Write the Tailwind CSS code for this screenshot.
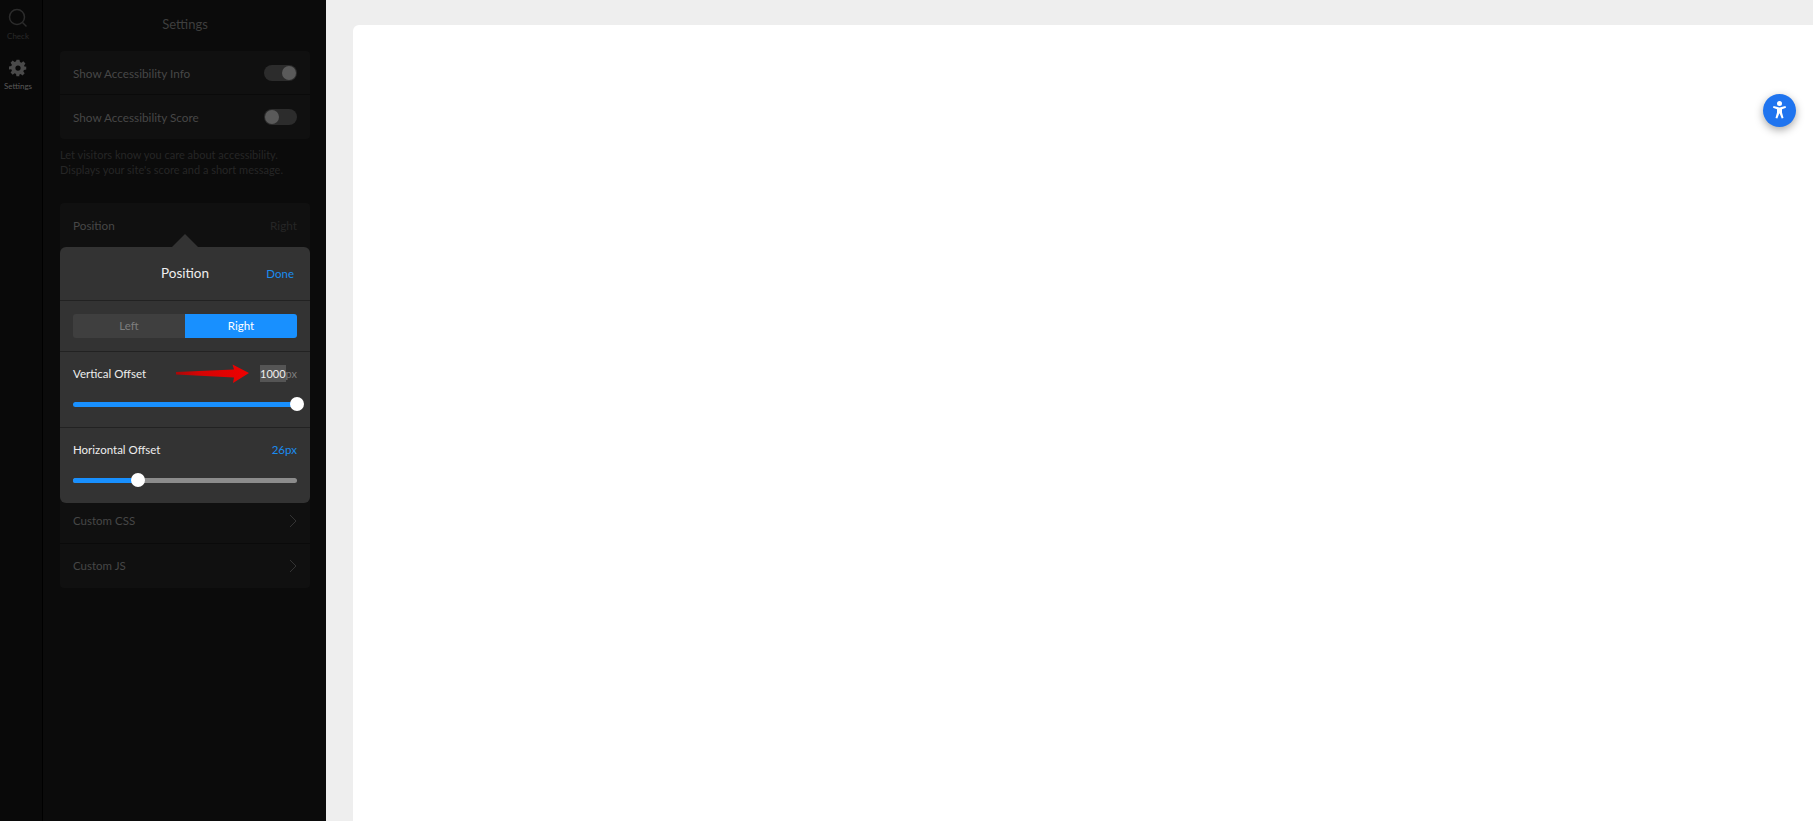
<!DOCTYPE html>
<html>
<head>
<meta charset="utf-8">
<script src="https://cdn.jsdelivr.net/npm/@tailwindcss/browser@4"></script>
</head>
<body class="overflow-hidden">
<div class="relative flex h-[821px] w-[1813px] overflow-hidden bg-[#eeeeee] font-['Lato',sans-serif]">

  <!-- icon rail -->
  <div class="flex h-full w-[43px] shrink-0 flex-col items-center border-r border-black bg-[#090909] pr-[6px] pt-[7px]">
    <svg class="h-[22px] w-[22px]" viewBox="0 0 22 22" fill="none" stroke="#2c2c2c" stroke-width="1.5">
      <circle cx="10" cy="10" r="7.5"></circle>
      <path d="M15.500 15.500L19.500 19.500"></path>
    </svg>
    <span class="mt-[1px] text-[8px] leading-[12px] text-[#2a2a2a]">Check</span>
    <svg class="mt-[17px] h-[18px] w-[18px]" viewBox="0 0 24 24" fill="#4a4a4a">
      <path fill-rule="evenodd" d="M10 1h4l.6 3.100 1.900.8 2.600-1.800 2.800 2.800-1.800 2.600.8 1.900L23 10v4l-3.100.6-.8 1.900 1.800 2.600-2.800 2.800-2.600-1.800-1.900.8L13.900 23h-4l-.5-3.100-1.900-.8-2.600 1.800-2.800-2.800 1.800-2.600-.8-1.900L0 13.900v-4l3.100-.5.8-1.900-1.800-2.600 2.800-2.800 2.600 1.800 1.900-.8zM12 8.500a3.500 3.500 0 100 7 3.500 3.500 0 000-7z"></path>
    </svg>
    <span class="mt-[3px] text-[8px] leading-[12px] text-[#5a5a5a]">Settings</span>
  </div>

  <!-- settings panel -->
  <div class="relative h-full w-[283px] shrink-0 bg-[#0b0b0b] pl-[17px] pr-[16px]">
    <div class="h-[51px] pt-[13px] text-center text-[13px] leading-[22px] text-[#3e3e3e]">Settings</div>

    <div class="rounded-[4px] bg-[#101010]">
      <div class="flex h-[44px] items-center justify-between border-b border-[#0a0a0a] px-[13px]">
        <span class="mt-[2px] text-[11.750px] text-[#474747]">Show Accessibility Info</span>
        <div class="flex h-[16px] w-[33px] items-center justify-end rounded-full bg-[#2c2c2c] pr-[1px]">
          <div class="h-[14px] w-[14px] rounded-full bg-[#5a5a5a]"></div>
        </div>
      </div>
      <div class="flex h-[44px] items-center justify-between px-[13px]">
        <span class="mt-[2px] text-[11.750px] text-[#474747]">Show Accessibility Score</span>
        <div class="flex h-[16px] w-[33px] items-center rounded-full bg-[#2c2c2c] pl-[1px]">
          <div class="h-[14px] w-[14px] rounded-full bg-[#5a5a5a]"></div>
        </div>
      </div>
    </div>

    <p class="mt-[8px] text-[11px] leading-[15px] text-[#262626]">Let visitors know you care about accessibility.<br>Displays your site's score and a short message.</p>

    <div class="mt-[26px] rounded-[4px] bg-[#101010]">
      <div class="flex h-[44px] items-center justify-between px-[13px]">
        <span class="mt-[2px] text-[11.750px] text-[#474747]">Position</span>
        <span class="mt-[2px] text-[11.750px] text-[#262626]">Right</span>
      </div>
      <div class="h-[252px]"></div>
      <div class="flex h-[45px] items-center justify-between border-b border-[#0a0a0a] px-[13px]">
        <span class="text-[11.500px] text-[#474747]">Custom CSS</span>
        <svg class="h-[14px] w-[8px]" viewBox="0 0 8 14" fill="none" stroke="#333333" stroke-width="1"><path d="M1 1l6 6-6 6"></path></svg>
      </div>
      <div class="flex h-[44px] items-center justify-between px-[13px]">
        <span class="text-[11.500px] text-[#474747]">Custom JS</span>
        <svg class="h-[14px] w-[8px]" viewBox="0 0 8 14" fill="none" stroke="#333333" stroke-width="1"><path d="M1 1l6 6-6 6"></path></svg>
      </div>
    </div>

    <!-- position popover -->
    <div class="absolute left-[17px] top-[247px] w-[250px] rounded-[6px] bg-[#333333]">
      <div class="absolute left-[112px] top-[-13px] h-0 w-0 border-x-[13px] border-b-[13px] border-x-transparent border-b-[#333333]"></div>

      <div class="relative flex h-[54px] items-center justify-center border-b border-[#222222]">
        <span class="text-[13.500px] text-[#eeeeee]">Position</span>
        <span class="absolute right-[16px] text-[11.500px] text-[#1a8cf0]">Done</span>
      </div>

      <div class="h-[51px] border-b border-[#222222] px-[13px] pt-[13px]">
        <div class="flex h-[24px] text-[11.500px]">
          <div class="flex w-1/2 items-center justify-center rounded-l-[3px] bg-[#3f3f3f] text-[#7d7d7d]">Left</div>
          <div class="flex w-1/2 items-center justify-center rounded-r-[3px] bg-[#1890ff] text-white">Right</div>
        </div>
      </div>

      <div class="h-[76px] border-b border-[#222222] px-[13px] pt-[13px]">
        <div class="flex h-[17px] items-center justify-between">
          <span class="text-[11.500px] text-[#eeeeee]">Vertical Offset</span>
          <span class="text-[11px] leading-[17px] text-[#7d7d7d]"><span class="inline-block bg-[#555555] text-[#eeeeee]">1000</span>px</span>
        </div>
        <div class="relative mt-[20px] h-[5px] rounded-full bg-[#1890ff]">
          <div class="absolute right-[-7px] top-[-5px] h-[14px] w-[14px] rounded-full bg-white"></div>
        </div>
      </div>

      <div class="h-[75px] px-[13px] pt-[13px]">
        <div class="flex h-[17px] items-center justify-between">
          <span class="text-[11.500px] text-[#eeeeee]">Horizontal Offset</span>
          <span class="text-[11.500px] text-[#1a8cf0]">26px</span>
        </div>
        <div class="relative mt-[20px] h-[5px] rounded-full bg-[#8c8c8c]">
          <div class="h-full w-[65px] rounded-l-full bg-[#1890ff]"></div>
          <div class="absolute left-[58px] top-[-5px] h-[14px] w-[14px] rounded-full bg-white"></div>
        </div>
      </div>

      <!-- red annotation arrow -->
      <svg class="absolute left-[116px] top-[117px] h-[20px] w-[74px]" viewBox="0 0 74 20">
        <defs>
          <linearGradient id="arrowFill" x1="0" y1="0" x2="1" y2="0">
            <stop offset="0" stop-color="#a80808"></stop>
            <stop offset="0.3" stop-color="#d40404"></stop>
            <stop offset="1" stop-color="#ee0000"></stop>
          </linearGradient>
        </defs>
        <path d="M0 8L58 5.500L56.500 .5L73 9L57 19L58 13.500L0 10.500Z" fill="url(#arrowFill)"></path>
      </svg>
    </div>
  </div>

  <!-- preview area -->
  <div class="ml-[27px] mt-[25px] flex-1 rounded-tl-[6px] bg-white"></div>

  <!-- accessibility button -->
  <div class="absolute left-[1763px] top-[94px] h-[33px] w-[33px] rounded-full bg-[#1f74ef] shadow-[0_3px_8px_rgba(0,0,0,0.35)]">
    <svg class="h-[33px] w-[33px]" viewBox="0 0 33 33" fill="white">
      <circle cx="16.500" cy="9.500" r="2.500"></circle>
      <path d="M10.500 12L16.500 13.500L22.500 12L23 13.800L19 15.200V18.500L20.500 24L18.700 24.600L16.700 19.500H16.300L14.300 24.600L12.500 24L14 18.500V15.200L10 13.800Z"></path>
    </svg>
  </div>
</div>
</body>
</html>
